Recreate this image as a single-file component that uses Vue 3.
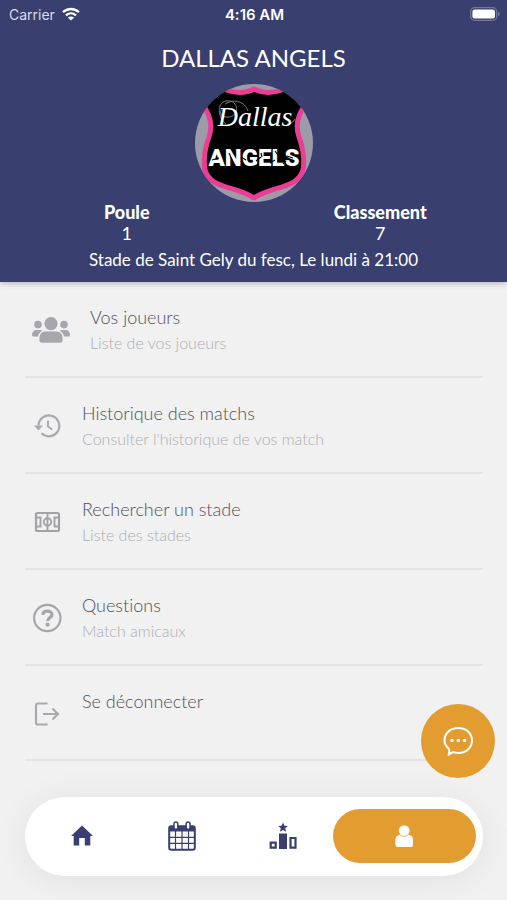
<template>
  <div class="screen">
    <header class="team-header">
      <div class="status-bar">
        <div class="status-left">
          <span>Carrier</span>
          <svg class="wifi" viewBox="0 0 18 14" aria-hidden="true">
            <path d="M1 5.2C5.6 .9 12.4 .9 17 5.2M4 8.3C6.9 5.7 11.1 5.7 14 8.3" fill="none" stroke="#fff" stroke-width="2.3" />
            <path d="M9 13.6L5.8 10.6C7.6 9 10.4 9 12.2 10.6Z" fill="#fff" />
          </svg>
        </div>
        <span class="time">4:16 AM</span>
        <div class="status-right">
          <svg class="battery" viewBox="0 0 30 14" aria-hidden="true">
            <rect x=".7" y=".7" width="26" height="12.6" rx="4" fill="none" stroke="#74789b" stroke-width="1.3" />
            <rect x="2.4" y="2.4" width="22.6" height="9.2" rx="2.4" fill="#fff" />
            <path d="M28 4.8c2.3 1 2.3 3.4 0 4.4z" fill="#74789b" />
          </svg>
        </div>
      </div>

      <h1 class="team-name">DALLAS ANGELS</h1>

      <svg class="team-logo" viewBox="0 0 118 118" role="img" aria-label="Dallas Angels">
        <defs>
          <clipPath id="logo-clip"><circle cx="59" cy="59" r="59" /></clipPath>
        </defs>
        <g clip-path="url(#logo-clip)">
          <rect width="118" height="118" fill="#9c9ca9" />
          <path
            d="M59 5C50 10 38 9 26 4L7 20C16 31 18 41 14 53C10 64 8 74 10 86C15 105 42 102 59 114C76 102 103 105 108 86C110 74 108 64 104 53C100 41 102 31 111 20L92 4C80 9 68 10 59 5Z"
            fill="#000" stroke="#ec3d94" stroke-width="5" stroke-linejoin="round"
          />
          <path d="M31 40C23 34 21 19 31 17C43 15 46 31 34 33C26 34 23 28 28 24M30 20C40 14 50 18 53 27M92 40C95 41 98 38 100 35" fill="none" stroke="#8a8a8f" stroke-width=".9" />
          <text x="60" y="42" class="logo-script">Dallas</text>
          <text x="59" y="82" class="logo-block">ANGELS</text>
          <path d="M17 76l7-2M34 69l4 9M46 73l5 3M61 77l5-4M66 69l1 4M75 79l5-3M80 67l3 4M92 72l6 2M88 80l3-3" stroke="#000" stroke-width="1.2" />
        </g>
      </svg>

      <dl class="stats">
        <div v-for="stat in stats" :key="stat.label" class="stat">
          <dt>{{ stat.label }}</dt>
          <dd>{{ stat.value }}</dd>
        </div>
      </dl>
      <p class="place">Stade de Saint Gely du fesc, Le lundi à 21:00</p>
    </header>

    <main class="menu">
      <a v-for="item in items" :key="item.icon" href="#" class="menu-item">
        <svg v-if="item.icon === 'players'" class="icon icon-wide" viewBox="0 0 38 28" aria-hidden="true">
          <g fill="#a6a6ac">
            <circle cx="19" cy="7.6" r="6.6" />
            <circle cx="6" cy="8.6" r="3.8" />
            <circle cx="32" cy="8.6" r="3.8" />
            <path d="M13 15.5h12c3.5 0 5.5 3 5.5 6.5v2.2c0 1.5-1 2.5-2.5 2.5H10c-1.5 0-2.5-1-2.5-2.5V22c0-3.5 2-6.5 5.5-6.5z" />
            <path d="M4.5 14h3.8c.8 0 1.5.3 2 .7C8 16 6.5 18 6 20.5H1.5C.6 20.5 0 19.9 0 19c0-3 1.5-5 4.5-5zM33.500 14h-3.800c-.8 0-1.500.3-2 .7C30 16 31.500 18 32 20.500h4.500c.9 0 1.500-.6 1.500-1.500 0-3-1.500-5-4.500-5z" />
          </g>
        </svg>
        <svg v-else-if="item.icon === 'history'" class="icon" viewBox="0 0 30 30" aria-hidden="true">
          <path d="M6.5 14.5A10.4 10.4 0 1 1 9.6 22.3" fill="none" stroke="#a9a9ae" stroke-width="2.2" />
          <path d="M2 14.5h9l-4.500 5z" fill="#a9a9ae" />
          <path d="M16 9.5v6l4.2 3" fill="none" stroke="#a9a9ae" stroke-width="1.9" />
        </svg>
        <svg v-else-if="item.icon === 'field'" class="icon" viewBox="0 0 30 30" aria-hidden="true">
          <g fill="none" stroke="#a2a2a7" stroke-width="1.9">
            <rect x="4" y="6" width="23" height="18" rx="1.5" stroke-width="2.2" />
            <path d="M15.5 6v18M4 10.5h4.5v9H4M27 10.5h-4.500v9H27" />
            <circle cx="15.5" cy="15" r="3.7" />
          </g>
        </svg>
        <svg v-else-if="item.icon === 'help'" class="icon" viewBox="0 0 30 30" aria-hidden="true">
          <circle cx="15.3" cy="15" r="13.2" fill="none" stroke="#a5a5aa" stroke-width="2.2" />
          <path d="M10.8 11.8c.3-5 9.2-4.700 9.200-.3 0 3.200-4.400 3-4.400 6.500" fill="none" stroke="#a5a5aa" stroke-width="3.2" />
          <circle cx="15.6" cy="21.7" r="2.1" fill="#a5a5aa" />
        </svg>
        <svg v-else class="icon" viewBox="0 0 30 30" aria-hidden="true">
          <path d="M15.5 4.5H6a2 2 0 0 0-2 2v17a2 2 0 0 0 2 2h9.5M11 15h15.5M20.5 9.5L26 15l-5.500 5.500" fill="none" stroke="#a9a9ad" stroke-width="2.2" />
        </svg>
        <span class="menu-text">
          <span class="menu-title">{{ item.title }}</span>
          <span v-if="item.subtitle" class="menu-subtitle">{{ item.subtitle }}</span>
        </span>
      </a>
    </main>

    <button type="button" class="chat-button" aria-label="Messages">
      <svg viewBox="0 0 32 32" aria-hidden="true">
        <path d="M7 24C4.2 21.5 2.5 18.5 2.5 15.5C2.5 8.2 8.5 3 16.3 3S30 8.2 30 15.5S24 28 16.3 28C14.2 28 12.5 27.5 11 27L6.5 30C7.5 27.8 7.5 25.5 7 24Z" fill="none" stroke="#fff" stroke-width="2" stroke-linejoin="round" />
        <g fill="#fff">
          <circle cx="10" cy="15.5" r="1.7" />
          <circle cx="16.3" cy="15.5" r="1.7" />
          <circle cx="22.6" cy="15.5" r="1.7" />
        </g>
      </svg>
    </button>

    <nav class="tab-bar">
      <a href="#" class="tab" aria-label="Accueil">
        <svg viewBox="0 0 30 30" aria-hidden="true">
          <path d="M15 4.5L26 15h-2.700v9.500h-5.500V17h-5.600v7.500H6.700V15H4z" fill="#393f70" />
        </svg>
      </a>
      <a href="#" class="tab" aria-label="Calendrier">
        <svg viewBox="0 0 30 30" aria-hidden="true">
          <rect x="2.2" y="5.2" width="25.6" height="23.6" rx="2" fill="#fff" stroke="#393f70" stroke-width="2" />
          <path d="M2 5h26v5.5H2z" fill="#393f70" />
          <path d="M8.5 10v18M15 10v18M21.5 10v18M3 16.3h24M3 22.3h24" fill="none" stroke="#393f70" stroke-width="1.2" />
          <rect x="7" y="1" width="3.8" height="7.5" rx="1.9" fill="#fff" stroke="#393f70" stroke-width="1.5" />
          <rect x="19.2" y="1" width="3.8" height="7.5" rx="1.9" fill="#fff" stroke="#393f70" stroke-width="1.5" />
        </svg>
      </a>
      <a href="#" class="tab" aria-label="Classement">
        <svg viewBox="0 0 30 30" aria-hidden="true">
          <path d="M11 12.5h8V28h-8z" fill="#393f70" />
          <path d="M2.7 21.7h5v5h-5zM22.5 17h5v9.7h-5z" fill="none" stroke="#393f70" stroke-width="2.2" />
          <path d="M15 1.5l1.4 3.2 3.4.3-2.600 2.300.8 3.400-3-1.800-3 1.800.8-3.400L10.200 5l3.400-.3z" fill="#393f70" />
        </svg>
      </a>
      <a href="#" class="tab tab-active" aria-label="Profil" aria-current="page">
        <svg viewBox="0 0 30 30" aria-hidden="true">
          <rect x="6.5" y="14" width="17.5" height="12" rx="4.5" fill="#fff" />
          <path d="M6.5 20h17.5v4a2 2 0 0 1-2 2h-13.500a2 2 0 0 1-2-2z" fill="#fff" />
          <circle cx="15.2" cy="9.7" r="5.7" fill="#fff" stroke="#e29c30" stroke-width=".7" />
        </svg>
      </a>
    </nav>
  </div>
</template>

<script setup>
const stats = [
  { label: 'Poule', value: 1 },
  { label: 'Classement', value: 7 },
];

const items = [
  { icon: 'players', title: 'Vos joueurs', subtitle: 'Liste de vos joueurs' },
  { icon: 'history', title: 'Historique des matchs', subtitle: "Consulter l'historique de vos match" },
  { icon: 'field', title: 'Rechercher un stade', subtitle: 'Liste des stades' },
  { icon: 'help', title: 'Questions', subtitle: 'Match amicaux' },
  { icon: 'logout', title: 'Se déconnecter' },
];
</script>

<style>
body {
  background: #f1f1f2;
}
</style>

<style scoped>
.screen {
  position: relative;
  min-height: 100vh;
  box-sizing: border-box;
  padding-bottom: 139px;
  background: #f1f1f2;
  font-family: Lato, sans-serif;
  font-variant-ligatures: none;
  overflow: hidden;
}

.team-header {
  display: flex;
  flex-direction: column;
  align-items: center;
  padding-bottom: 12px;
  background: #393f6e;
  color: #fff;
  box-shadow: 0 1px 6px rgba(40, 45, 90, 0.35);
}

.status-bar {
  display: flex;
  align-items: center;
  align-self: stretch;
  height: 28px;
  padding: 0 7px 0 9px;
  font-family: Inter, sans-serif;
  font-size: 15px;
}

.status-left,
.status-right {
  display: flex;
  flex: 1;
  align-items: center;
  gap: 7px;
}

.status-left {
  font-size: 14px;
  color: #dcdde8;
}

.status-right {
  justify-content: flex-end;
}

.wifi {
  width: 18px;
  height: 14px;
}

.battery {
  width: 30px;
  height: 14px;
}

.time {
  font-weight: 600;
}

.team-name {
  margin: 14px 0 10px;
  font-size: 24px;
  font-weight: 400;
  line-height: 32px;
}

.team-logo {
  width: 118px;
  height: 118px;
}

.logo-script {
  fill: #fff;
  font-family: "Liberation Serif", serif;
  font-size: 28px;
  font-style: italic;
  text-anchor: middle;
}

.logo-block {
  fill: #fff;
  font-family: Roboto, sans-serif;
  font-size: 24px;
  font-weight: 900;
  text-anchor: middle;
}

.stats {
  display: flex;
  align-self: stretch;
  margin: 0;
  font-size: 18px;
  line-height: 21px;
  text-align: center;
}

.stat {
  flex: 1;
}

.stat dt {
  font-weight: 900;
}

.stat dd {
  margin: 0;
}

.place {
  margin: 5px 0 0;
  font-size: 17px;
  line-height: 21px;
}

.menu {
  padding: 0 24px 0 25px;
}

.menu-item {
  display: flex;
  align-items: center;
  gap: 20px;
  box-sizing: border-box;
  min-height: 96px;
  padding: 2px 0 0 7px;
  border-bottom: 2px solid #e4e4e5;
  color: inherit;
  text-decoration: none;
}

.menu-item:last-child {
  min-height: 95px;
}

.icon {
  flex: none;
  width: 30px;
  height: 30px;
}

.icon-wide {
  width: 38px;
  height: 28px;
}

.menu-text {
  display: flex;
  flex-direction: column;
  min-height: 50px;
  font-weight: 300;
  line-height: 25px;
}

.menu-title {
  color: #505054;
  font-size: 18px;
}

.menu-subtitle {
  color: #adadb1;
  font-size: 16px;
}

.chat-button {
  position: absolute;
  right: 12px;
  bottom: 122px;
  display: flex;
  align-items: center;
  justify-content: center;
  width: 74px;
  height: 74px;
  padding: 0;
  border: 0;
  border-radius: 50%;
  background: #e29c30;
}

.chat-button svg {
  width: 32px;
  height: 32px;
}

.tab-bar {
  position: absolute;
  right: 24px;
  bottom: 24px;
  left: 25px;
  display: flex;
  padding: 12px 7px 13px;
  border-radius: 40px;
  background: #fff;
  box-shadow: 0 4px 36px rgba(0, 0, 0, 0.07);
}

.tab {
  display: flex;
  flex: 1;
  align-items: center;
  justify-content: center;
  height: 54px;
}

.tab svg {
  width: 30px;
  height: 30px;
}

.tab-active {
  flex: 0 0 143px;
  border-radius: 27px;
  background: #e29c30;
}
</style>
